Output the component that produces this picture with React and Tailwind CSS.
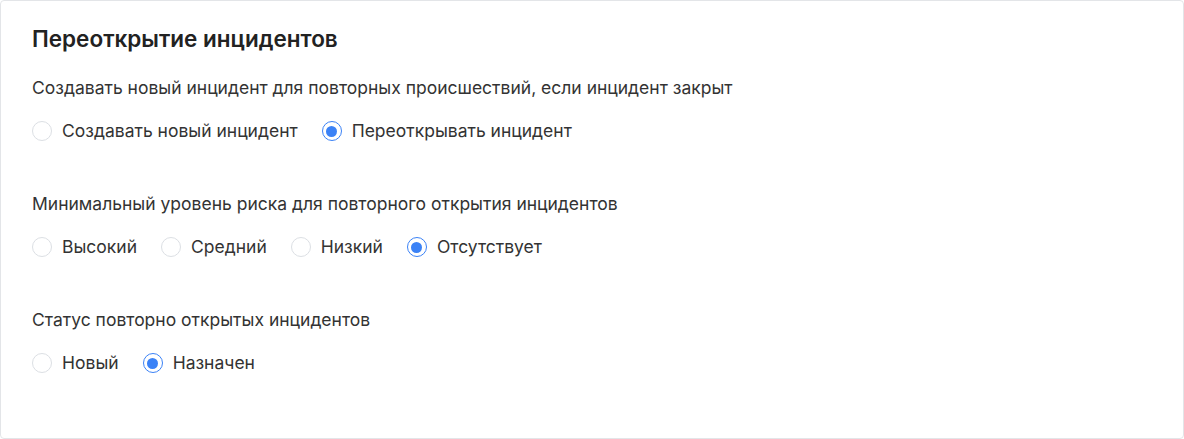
import React from "react";

function Radio({ label, checked }) {
  return (
    <label className="flex items-center gap-[10px] h-6">
      <span
        className={
          checked
            ? "w-5 h-5 rounded-full border-[1.5px] border-[#3b82f6] flex items-center justify-center bg-white"
            : "w-5 h-5 rounded-full border border-[#dcdfe4] bg-white"
        }
      >
        {checked && <span className="w-[11px] h-[11px] rounded-full bg-[#3b82f6]" />}
      </span>
      <span className="text-[17.5px] leading-6 text-[#333333]">{label}</span>
    </label>
  );
}

function Group({ title, options, value }) {
  return (
    <div className="flex flex-col gap-[19px]">
      <div className="text-[17.5px] leading-6 text-[#333333]">{title}</div>
      <div className="flex items-center gap-6">
        {options.map((o) => (
          <Radio key={o} label={o} checked={o === value} />
        ))}
      </div>
    </div>
  );
}

export default function App() {
  return (
    <div
      className="w-[1184px] h-[439px] bg-white"
      style={{ fontFamily: "Inter, 'Noto Sans', sans-serif" }}
    >
      <div className="h-[439px] border border-[#e3e5e8] rounded-[4px] pt-[24px] px-[31px] flex flex-col">
        <h2 className="text-[22.5px] leading-7 font-semibold text-[#222222]">Переоткрытие инцидентов</h2>
        <div className="mt-[23px] flex flex-col gap-[49px]">
          <Group
            title="Создавать новый инцидент для повторных происшествий, если инцидент закрыт"
            options={["Создавать новый инцидент", "Переоткрывать инцидент"]}
            value="Переоткрывать инцидент"
          />
          <Group
            title="Минимальный уровень риска для повторного открытия инцидентов"
            options={["Высокий", "Средний", "Низкий", "Отсутствует"]}
            value="Отсутствует"
          />
          <Group
            title="Статус повторно открытых инцидентов"
            options={["Новый", "Назначен"]}
            value="Назначен"
          />
        </div>
      </div>
    </div>
  );
}
